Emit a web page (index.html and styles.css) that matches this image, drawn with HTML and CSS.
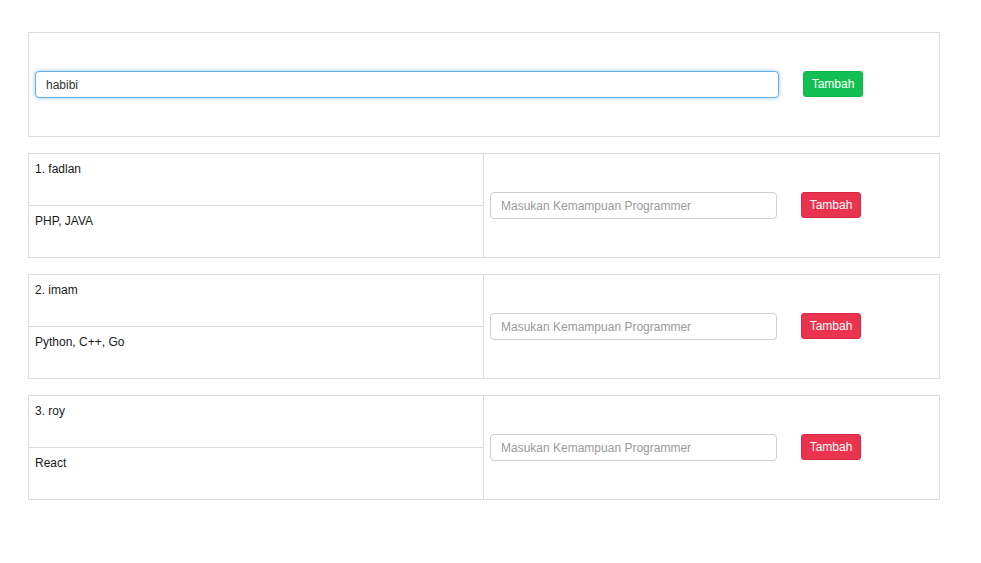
FILE: index.html
```html
<!DOCTYPE html>
<html>
<head>
<meta charset="utf-8">
<link rel="stylesheet" href="styles.css">
</head>
<body>
<div class="container">
  <div class="box top">
    <input class="field focus" type="text" value="habibi">
    <button class="btn green">Tambah</button>
  </div>

  <div class="box row">
    <div class="left">
      <div class="cell first">1. fadlan</div>
      <div class="cell">PHP, JAVA</div>
    </div>
    <div class="right">
      <input class="field small" type="text" placeholder="Masukan Kemampuan Programmer">
      <button class="btn red">Tambah</button>
    </div>
  </div>

  <div class="box row">
    <div class="left">
      <div class="cell first">2. imam</div>
      <div class="cell">Python, C++, Go</div>
    </div>
    <div class="right">
      <input class="field small" type="text" placeholder="Masukan Kemampuan Programmer">
      <button class="btn red">Tambah</button>
    </div>
  </div>

  <div class="box row">
    <div class="left">
      <div class="cell first">3. roy</div>
      <div class="cell">React</div>
    </div>
    <div class="right">
      <input class="field small" type="text" placeholder="Masukan Kemampuan Programmer">
      <button class="btn red">Tambah</button>
    </div>
  </div>
</div>
</body>
</html>
```

FILE: styles.css
```css
* { box-sizing: border-box; }
body {
  margin: 0;
  background: #fff;
  font-family: "Liberation Sans", Arial, sans-serif;
  font-size: 12px;
  color: #1a1a1a;
}
.container {
  width: 912px;
  margin: 32px 0 0 28px;
  display: flex;
  flex-direction: column;
  gap: 16px;
}
.box {
  border: 1px solid #dcdcdc;
  background: #fff;
}
.top {
  height: 105px;
  display: flex;
  align-items: center;
  padding-left: 6px;
}
.field {
  height: 27px;
  border: 1px solid #cfcfcf;
  border-radius: 4px;
  padding: 0 10px;
  font-family: "Liberation Sans", Arial, sans-serif;
  font-size: 12px;
  color: #333;
  outline: none;
  background: #fff;
}
.field::placeholder { color: #9a9a9a; }
.focus {
  width: 744px;
  border-color: #66afe9;
  box-shadow: 0 0 4px rgba(102, 175, 233, 0.7);
  caret-color: #000;
}
.small { width: 287px; }
.btn {
  height: 26px;
  width: 60px;
  border: 1px solid transparent;
  border-radius: 3px;
  color: #fff;
  font-family: "Liberation Sans", Arial, sans-serif;
  font-size: 12px;
  padding: 0;
  margin: 0 0 1px 24px;
}
.green { background: #12c052; border-color: #10b44c; }
.red { background: #e9334f; border-color: #d92a45; }
.row {
  height: 105px;
  display: flex;
}
.left {
  width: 455px;
  border-right: 1px solid #dcdcdc;
  display: flex;
  flex-direction: column;
}
.cell {
  flex: 1;
  padding: 8px 6px 6px;
  line-height: 14px;
}
.cell.first { border-bottom: 1px solid #dcdcdc; }
.right {
  flex: 1;
  display: flex;
  align-items: center;
  padding-left: 6px;
}
```
